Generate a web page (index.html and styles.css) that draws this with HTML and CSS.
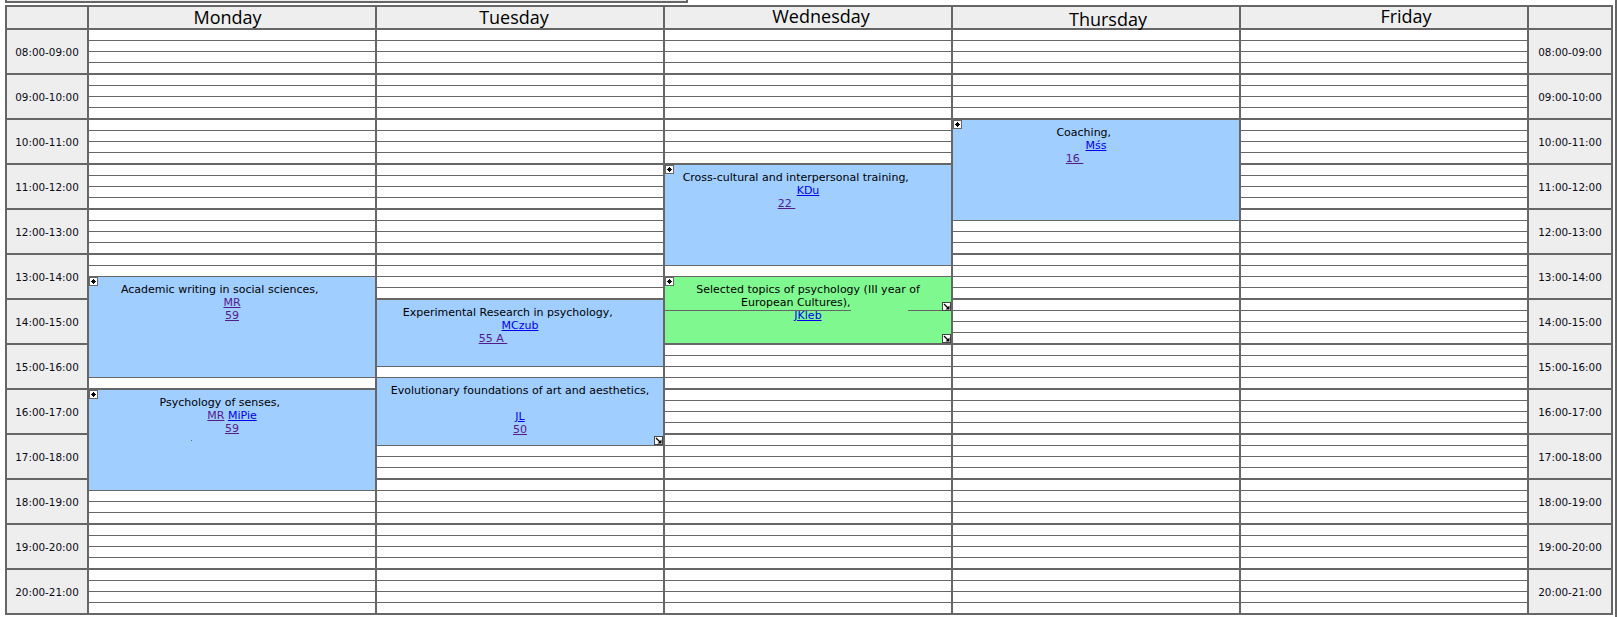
FILE: index.html
```html
<!DOCTYPE html>
<html lang="en">
<head>
<meta charset="utf-8">
<title>Timetable</title>
<link rel="stylesheet" href="styles.css">
</head>
<body>
<div class="page">
  <div class="topbar"></div>
  <div class="tt">
    <div class="hd"></div>
    <div class="hd day d-mon"><span>Monday</span></div>
    <div class="hd day d-tue"><span>Tuesday</span></div>
    <div class="hd day d-wed"><span>Wednesday</span></div>
    <div class="hd day d-thu"><span>Thursday</span></div>
    <div class="hd day d-fri"><span>Friday</span></div>
    <div class="hd"></div>

    <div class="times">
      <div class="tcell">08:00-09:00</div><div class="tcell">09:00-10:00</div><div class="tcell">10:00-11:00</div><div class="tcell">11:00-12:00</div><div class="tcell">12:00-13:00</div><div class="tcell">13:00-14:00</div><div class="tcell">14:00-15:00</div><div class="tcell">15:00-16:00</div><div class="tcell">16:00-17:00</div><div class="tcell">17:00-18:00</div><div class="tcell">18:00-19:00</div><div class="tcell">19:00-20:00</div><div class="tcell">20:00-21:00</div>
    </div>

    <!-- Monday -->
    <div class="daycol">
      <div class="hour"><div class="q"></div><div class="q"></div><div class="q"></div><div class="q"></div></div>
      <div class="hour"><div class="q"></div><div class="q"></div><div class="q"></div><div class="q"></div></div>
      <div class="hour"><div class="q"></div><div class="q"></div><div class="q"></div><div class="q"></div></div>
      <div class="hour"><div class="q"></div><div class="q"></div><div class="q"></div><div class="q"></div></div>
      <div class="hour"><div class="q"></div><div class="q"></div><div class="q"></div><div class="q"></div></div>
      <div class="hour"><div class="q"></div><div class="q"></div><div class="q"></div><div class="q"></div></div>
      <div class="hour"><div class="q"></div><div class="q"></div><div class="q"></div><div class="q"></div></div>
      <div class="hour"><div class="q"></div><div class="q"></div><div class="q"></div><div class="q"></div></div>
      <div class="hour"><div class="q"></div><div class="q"></div><div class="q"></div><div class="q"></div></div>
      <div class="hour"><div class="q"></div><div class="q"></div><div class="q"></div><div class="q"></div></div>
      <div class="hour"><div class="q"></div><div class="q"></div><div class="q"></div><div class="q"></div></div>
      <div class="hour"><div class="q"></div><div class="q"></div><div class="q"></div><div class="q"></div></div>
      <div class="hour"><div class="q"></div><div class="q"></div><div class="q"></div><div class="q"></div></div>

      <div class="ev" style="top:246px;height:102px">
        <svg class="pin" width="9" height="9" viewBox="0 0 9 9"><rect x="0.5" y="0.5" width="8" height="8" fill="#fff" stroke="#666"/><rect x="3" y="3" width="3" height="3" fill="#000"/><rect x="4" y="2" width="1" height="5" fill="#000"/><rect x="2" y="4" width="5" height="1" fill="#000"/></svg>
        <div class="ttl">Academic writing in social sciences, <span class="sp"></span></div>
        <div><a class="v" href="#">MR</a></div>
        <div><a class="v" href="#">59</a></div>
      </div>

      <div class="ev" style="top:359px;height:102px">
        <svg class="pin" width="9" height="9" viewBox="0 0 9 9"><rect x="0.5" y="0.5" width="8" height="8" fill="#fff" stroke="#666"/><rect x="3" y="3" width="3" height="3" fill="#000"/><rect x="4" y="2" width="1" height="5" fill="#000"/><rect x="2" y="4" width="5" height="1" fill="#000"/></svg>
        <div class="ttl">Psychology of senses, <span class="sp"></span></div>
        <div><a class="v" href="#">MR</a> <a href="#">MiPie</a></div>
        <div><a class="v" href="#">59</a></div>
        <div class="dotline"><span class="dot"></span></div>
      </div>
    </div>

    <!-- Tuesday -->
    <div class="daycol">
      <div class="hour"><div class="q"></div><div class="q"></div><div class="q"></div><div class="q"></div></div>
      <div class="hour"><div class="q"></div><div class="q"></div><div class="q"></div><div class="q"></div></div>
      <div class="hour"><div class="q"></div><div class="q"></div><div class="q"></div><div class="q"></div></div>
      <div class="hour"><div class="q"></div><div class="q"></div><div class="q"></div><div class="q"></div></div>
      <div class="hour"><div class="q"></div><div class="q"></div><div class="q"></div><div class="q"></div></div>
      <div class="hour"><div class="q"></div><div class="q"></div><div class="q"></div><div class="q"></div></div>
      <div class="hour"><div class="q"></div><div class="q"></div><div class="q"></div><div class="q"></div></div>
      <div class="hour"><div class="q"></div><div class="q"></div><div class="q"></div><div class="q"></div></div>
      <div class="hour"><div class="q"></div><div class="q"></div><div class="q"></div><div class="q"></div></div>
      <div class="hour"><div class="q"></div><div class="q"></div><div class="q"></div><div class="q"></div></div>
      <div class="hour"><div class="q"></div><div class="q"></div><div class="q"></div><div class="q"></div></div>
      <div class="hour"><div class="q"></div><div class="q"></div><div class="q"></div><div class="q"></div></div>
      <div class="hour"><div class="q"></div><div class="q"></div><div class="q"></div><div class="q"></div></div>

      <div class="ev" style="top:269px;height:68px">
        <div class="ttl">Experimental Research in psychology, <span class="sp"></span></div>
        <div><a href="#">MCzub</a></div>
        <div><a class="v" href="#">55 A&nbsp;</a><span class="sp-room sp-room-w"></span></div>
      </div>

      <div class="ev" style="top:347px;height:69px">
        <div class="ttl">Evolutionary foundations of art and aesthetics,<br><span class="sp"></span></div>
        <div><a href="#">JL</a></div>
        <div><a class="v" href="#">50</a></div>
        <svg class="arrow" width="9" height="9" viewBox="0 0 9 9"><rect x="0.5" y="0.5" width="8" height="8" fill="#fff" stroke="#444"/><path d="M2 2 L6 6" stroke="#000" stroke-width="1.3"/><path d="M7.5 3.5 V7.5 H3.5 Z" fill="#000"/></svg>
      </div>
    </div>

    <!-- Wednesday -->
    <div class="daycol">
      <div class="hour"><div class="q"></div><div class="q"></div><div class="q"></div><div class="q"></div></div>
      <div class="hour"><div class="q"></div><div class="q"></div><div class="q"></div><div class="q"></div></div>
      <div class="hour"><div class="q"></div><div class="q"></div><div class="q"></div><div class="q"></div></div>
      <div class="hour"><div class="q"></div><div class="q"></div><div class="q"></div><div class="q"></div></div>
      <div class="hour"><div class="q"></div><div class="q"></div><div class="q"></div><div class="q"></div></div>
      <div class="hour"><div class="q"></div><div class="q"></div><div class="q"></div><div class="q"></div></div>
      <div class="hour"><div class="q"></div><div class="q"></div><div class="q"></div><div class="q"></div></div>
      <div class="hour"><div class="q"></div><div class="q"></div><div class="q"></div><div class="q"></div></div>
      <div class="hour"><div class="q"></div><div class="q"></div><div class="q"></div><div class="q"></div></div>
      <div class="hour"><div class="q"></div><div class="q"></div><div class="q"></div><div class="q"></div></div>
      <div class="hour"><div class="q"></div><div class="q"></div><div class="q"></div><div class="q"></div></div>
      <div class="hour"><div class="q"></div><div class="q"></div><div class="q"></div><div class="q"></div></div>
      <div class="hour"><div class="q"></div><div class="q"></div><div class="q"></div><div class="q"></div></div>

      <div class="ev" style="top:134px;height:102px">
        <svg class="pin" width="9" height="9" viewBox="0 0 9 9"><rect x="0.5" y="0.5" width="8" height="8" fill="#fff" stroke="#666"/><rect x="3" y="3" width="3" height="3" fill="#000"/><rect x="4" y="2" width="1" height="5" fill="#000"/><rect x="2" y="4" width="5" height="1" fill="#000"/></svg>
        <div class="ttl">Cross-cultural and interpersonal training, <span class="sp"></span></div>
        <div><a href="#">KDu</a></div>
        <div><a class="v" href="#">22&nbsp;</a><span class="sp-room"></span></div>
      </div>

      <div class="ev ev-green" style="top:246px;height:68px">
        <span class="split split-a"></span><span class="split split-b"></span>
        <svg class="pin" width="9" height="9" viewBox="0 0 9 9"><rect x="0.5" y="0.5" width="8" height="8" fill="#fff" stroke="#666"/><rect x="3" y="3" width="3" height="3" fill="#000"/><rect x="4" y="2" width="1" height="5" fill="#000"/><rect x="2" y="4" width="5" height="1" fill="#000"/></svg>
        <div class="ttl">Selected topics of psychology (III year of<br>European Cultures), <span class="sp"></span></div>
        <div><a href="#">JKleb</a></div>
        <svg class="arrow arrow-mid" width="9" height="9" viewBox="0 0 9 9"><rect x="0.5" y="0.5" width="8" height="8" fill="#fff" stroke="#444"/><path d="M2 2 L6 6" stroke="#000" stroke-width="1.3"/><path d="M7.5 3.5 V7.5 H3.5 Z" fill="#000"/></svg>
        <svg class="arrow" width="9" height="9" viewBox="0 0 9 9"><rect x="0.5" y="0.5" width="8" height="8" fill="#fff" stroke="#444"/><path d="M2 2 L6 6" stroke="#000" stroke-width="1.3"/><path d="M7.5 3.5 V7.5 H3.5 Z" fill="#000"/></svg>
      </div>
    </div>

    <!-- Thursday -->
    <div class="daycol">
      <div class="hour"><div class="q"></div><div class="q"></div><div class="q"></div><div class="q"></div></div>
      <div class="hour"><div class="q"></div><div class="q"></div><div class="q"></div><div class="q"></div></div>
      <div class="hour"><div class="q"></div><div class="q"></div><div class="q"></div><div class="q"></div></div>
      <div class="hour"><div class="q"></div><div class="q"></div><div class="q"></div><div class="q"></div></div>
      <div class="hour"><div class="q"></div><div class="q"></div><div class="q"></div><div class="q"></div></div>
      <div class="hour"><div class="q"></div><div class="q"></div><div class="q"></div><div class="q"></div></div>
      <div class="hour"><div class="q"></div><div class="q"></div><div class="q"></div><div class="q"></div></div>
      <div class="hour"><div class="q"></div><div class="q"></div><div class="q"></div><div class="q"></div></div>
      <div class="hour"><div class="q"></div><div class="q"></div><div class="q"></div><div class="q"></div></div>
      <div class="hour"><div class="q"></div><div class="q"></div><div class="q"></div><div class="q"></div></div>
      <div class="hour"><div class="q"></div><div class="q"></div><div class="q"></div><div class="q"></div></div>
      <div class="hour"><div class="q"></div><div class="q"></div><div class="q"></div><div class="q"></div></div>
      <div class="hour"><div class="q"></div><div class="q"></div><div class="q"></div><div class="q"></div></div>

      <div class="ev" style="top:89px;height:102px">
        <svg class="pin" width="9" height="9" viewBox="0 0 9 9"><rect x="0.5" y="0.5" width="8" height="8" fill="#fff" stroke="#666"/><rect x="3" y="3" width="3" height="3" fill="#000"/><rect x="4" y="2" width="1" height="5" fill="#000"/><rect x="2" y="4" width="5" height="1" fill="#000"/></svg>
        <div class="ttl">Coaching, <span class="sp"></span></div>
        <div><a href="#">Mśs</a></div>
        <div><a class="v" href="#">16&nbsp;</a><span class="sp-room"></span></div>
      </div>
    </div>

    <!-- Friday -->
    <div class="daycol">
      <div class="hour"><div class="q"></div><div class="q"></div><div class="q"></div><div class="q"></div></div>
      <div class="hour"><div class="q"></div><div class="q"></div><div class="q"></div><div class="q"></div></div>
      <div class="hour"><div class="q"></div><div class="q"></div><div class="q"></div><div class="q"></div></div>
      <div class="hour"><div class="q"></div><div class="q"></div><div class="q"></div><div class="q"></div></div>
      <div class="hour"><div class="q"></div><div class="q"></div><div class="q"></div><div class="q"></div></div>
      <div class="hour"><div class="q"></div><div class="q"></div><div class="q"></div><div class="q"></div></div>
      <div class="hour"><div class="q"></div><div class="q"></div><div class="q"></div><div class="q"></div></div>
      <div class="hour"><div class="q"></div><div class="q"></div><div class="q"></div><div class="q"></div></div>
      <div class="hour"><div class="q"></div><div class="q"></div><div class="q"></div><div class="q"></div></div>
      <div class="hour"><div class="q"></div><div class="q"></div><div class="q"></div><div class="q"></div></div>
      <div class="hour"><div class="q"></div><div class="q"></div><div class="q"></div><div class="q"></div></div>
      <div class="hour"><div class="q"></div><div class="q"></div><div class="q"></div><div class="q"></div></div>
      <div class="hour"><div class="q"></div><div class="q"></div><div class="q"></div><div class="q"></div></div>
    </div>

    <div class="times">
      <div class="tcell">08:00-09:00</div><div class="tcell">09:00-10:00</div><div class="tcell">10:00-11:00</div><div class="tcell">11:00-12:00</div><div class="tcell">12:00-13:00</div><div class="tcell">13:00-14:00</div><div class="tcell">14:00-15:00</div><div class="tcell">15:00-16:00</div><div class="tcell">16:00-17:00</div><div class="tcell">17:00-18:00</div><div class="tcell">18:00-19:00</div><div class="tcell">19:00-20:00</div><div class="tcell">20:00-21:00</div>
    </div>
  </div>
</div>
</body>
</html>
```

FILE: styles.css
```css
html, body {
  margin: 0;
  padding: 0;
  background: #fff;
}

.page {
  box-sizing: border-box;
  min-height: 100vh;
  border-right: 2px solid #666;
  overflow: hidden;
}

.topbar {
  box-sizing: border-box;
  width: 683px;
  height: 3px;
  margin-left: 5px;
  margin-bottom: 2px;
  border: 2px solid #666;
  border-top: 0;
  background: #efefef;
}

.tt {
  display: grid;
  grid-template-columns: 80px repeat(5, 286px) 82px;
  grid-template-rows: 21px auto;
  gap: 2px;
  width: max-content;
  margin-left: 5px;
  border: 2px solid #666;
  background: #666;
}

.hd {
  background: #eeeeee;
  font-family: "Open Sans", "Noto Sans", sans-serif;
  font-size: 18px;
  line-height: 21px;
  color: #000;
  text-align: center;
  white-space: nowrap;
}

.d-mon { padding-right: 9px; }
.d-tue { padding-right: 12px; }
.d-wed { padding-left: 26px; line-height: 19px; }
.d-thu { padding-left: 24px; line-height: 25px; }
.d-fri { padding-left: 44px; line-height: 19px; }

.times {
  display: flex;
  flex-direction: column;
  gap: 2px;
}

.tcell {
  height: 43px;
  display: flex;
  align-items: center;
  justify-content: center;
  background: #eeeeee;
  font-family: "DejaVu Sans", Verdana, sans-serif;
  font-size: 10.4px;
  color: #0a0a14;
}

.daycol {
  position: relative;
  display: flex;
  flex-direction: column;
  gap: 2px;
}

.hour {
  height: 43px;
  display: flex;
  flex-direction: column;
  gap: 1px;
  background: #666;
}

.q {
  height: 10px;
  background: #fff;
}

.ev {
  position: absolute;
  left: -1px;
  right: -1px;
  box-sizing: border-box;
  border: 1px solid #666;
  background: #a0ceff;
  padding-top: 6px;
  font-family: "DejaVu Sans", Verdana, sans-serif;
  font-size: 11px;
  line-height: 13px;
  color: #000;
  text-align: center;
  white-space: nowrap;
}

.ev-green {
  background: #80f890;
}

.ev a {
  color: #0000ee;
  text-decoration: underline;
}

.ev a.v {
  color: #551a8b;
}

.sp {
  display: inline-block;
  width: 21px;
  height: 10px;
}

.sp-room {
  display: inline-block;
  width: 43px;
  height: 10px;
}

.sp-room-w {
  width: 54px;
}

.dotline {
  height: 13px;
}

.dot {
  display: inline-block;
  vertical-align: top;
  width: 1px;
  height: 1px;
  margin-top: 5px;
  margin-right: 81px;
  background: #6b6b4a;
}

.pin {
  position: absolute;
  top: 0;
  left: 0;
  display: block;
}

.arrow {
  position: absolute;
  right: 0;
  bottom: 0;
  display: block;
}

.arrow-mid {
  bottom: auto;
  top: 25px;
}

.split {
  position: absolute;
  top: 33px;
  height: 1px;
  background: #666;
}

.split-a {
  left: -1px;
  width: 187px;
}

.split-b {
  left: 243px;
  right: 0;
}
```
